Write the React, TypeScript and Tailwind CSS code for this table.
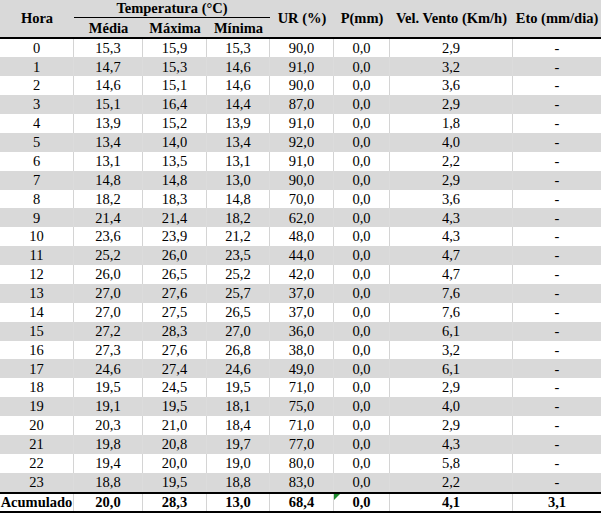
const ROWS: string[][] = [
  ['0', '15,3', '15,9', '15,3', '90,0', '0,0', '2,9', '-'],
  ['1', '14,7', '15,3', '14,6', '91,0', '0,0', '3,2', '-'],
  ['2', '14,6', '15,1', '14,6', '90,0', '0,0', '3,6', '-'],
  ['3', '15,1', '16,4', '14,4', '87,0', '0,0', '2,9', '-'],
  ['4', '13,9', '15,2', '13,9', '91,0', '0,0', '1,8', '-'],
  ['5', '13,4', '14,0', '13,4', '92,0', '0,0', '4,0', '-'],
  ['6', '13,1', '13,5', '13,1', '91,0', '0,0', '2,2', '-'],
  ['7', '14,8', '14,8', '13,0', '90,0', '0,0', '2,9', '-'],
  ['8', '18,2', '18,3', '14,8', '70,0', '0,0', '3,6', '-'],
  ['9', '21,4', '21,4', '18,2', '62,0', '0,0', '4,3', '-'],
  ['10', '23,6', '23,9', '21,2', '48,0', '0,0', '4,3', '-'],
  ['11', '25,2', '26,0', '23,5', '44,0', '0,0', '4,7', '-'],
  ['12', '26,0', '26,5', '25,2', '42,0', '0,0', '4,7', '-'],
  ['13', '27,0', '27,6', '25,7', '37,0', '0,0', '7,6', '-'],
  ['14', '27,0', '27,5', '26,5', '37,0', '0,0', '7,6', '-'],
  ['15', '27,2', '28,3', '27,0', '36,0', '0,0', '6,1', '-'],
  ['16', '27,3', '27,6', '26,8', '38,0', '0,0', '3,2', '-'],
  ['17', '24,6', '27,4', '24,6', '49,0', '0,0', '6,1', '-'],
  ['18', '19,5', '24,5', '19,5', '71,0', '0,0', '2,9', '-'],
  ['19', '19,1', '19,5', '18,1', '75,0', '0,0', '4,0', '-'],
  ['20', '20,3', '21,0', '18,4', '71,0', '0,0', '2,9', '-'],
  ['21', '19,8', '20,8', '19,7', '77,0', '0,0', '4,3', '-'],
  ['22', '19,4', '20,0', '19,0', '80,0', '0,0', '5,8', '-'],
  ['23', '18,8', '19,5', '18,8', '83,0', '0,0', '2,2', '-'],
]

const TOTAL = ['Acumulado', '20,0', '28,3', '13,0', '68,4', '0,0', '4,1', '3,1']

const COLS = 'grid grid-cols-[74px_69px_64px_63px_64px_56px_123px_88px]'

export default function App() {
  return (
    <div className="w-[601px] h-[514px] bg-white text-black font-['Liberation_Serif',serif] overflow-hidden">
      {/* Header */}
      <div className={`${COLS} grid-rows-[18px_18.5px] bg-[#d9d9d9] border-b-2 border-black text-[14.5px] font-bold leading-none`}>
        <div className="row-span-2 flex items-center justify-center">Hora</div>
        <div className="col-span-3 flex items-center justify-center border-b border-black">
          Temperatura (°C)
        </div>
        <div className="row-span-2 flex items-center justify-center whitespace-nowrap">UR (%)</div>
        <div className="row-span-2 flex items-center justify-center">P(mm)</div>
        <div className="row-span-2 flex items-center justify-center whitespace-nowrap">Vel. Vento (Km/h)</div>
        <div className="row-span-2 flex items-center justify-center whitespace-nowrap">Eto (mm/dia)</div>
        <div className="flex items-center justify-center pt-[2px]">Média</div>
        <div className="flex items-center justify-center pt-[2px]">Máxima</div>
        <div className="flex items-center justify-center pt-[2px]">Mínima</div>
      </div>

      {/* Hourly rows */}
      {ROWS.map((row, i) => (
        <div
          key={row[0]}
          className={`${COLS} h-[18.875px] text-[14.5px] leading-none ${
            i % 2 === 1 ? 'bg-[#d9d9d9]' : 'bg-white'
          }`}
        >
          {row.map((cell, j) => (
            <div
              key={j}
              className={`flex items-center justify-center ${
                j < 7 ? (i % 2 === 1 ? 'border-r border-[#dcdcdc]' : 'border-r border-[#d4d4d4]') : ''
              }`}
            >
              {cell}
            </div>
          ))}
        </div>
      ))}

      {/* Accumulated */}
      <div className={`${COLS} h-[21px] border-t-2 border-b-2 border-black text-[14.5px] font-bold leading-none`}>
        {TOTAL.map((cell, j) => (
          <div
            key={j}
            className={`relative flex items-center justify-center ${j < 7 ? 'border-r border-[#d4d4d4]' : ''}`}
          >
            {j === 5 && (
              <span className="absolute left-0 top-0 w-0 h-0 border-t-[6px] border-r-[6px] border-t-[#1e8a2e] border-r-transparent" />
            )}
            {cell}
          </div>
        ))}
      </div>
    </div>
  )
}
